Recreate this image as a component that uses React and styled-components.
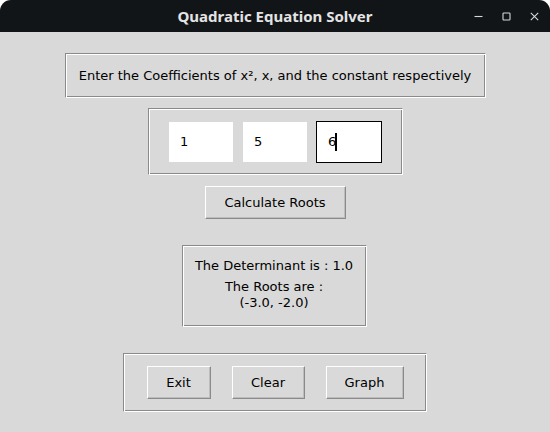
import React from 'react';
import styled, { createGlobalStyle, css } from 'styled-components';

const Global = createGlobalStyle`
  html, body { margin: 0; padding: 0; background: #ffffff; }
  body { font-family: "DejaVu Sans", sans-serif; }
  #root { width: 550px; height: 432px; }
`;

const groove = css`
  box-sizing: border-box;
  border: 1px solid;
  border-color: #8a8a8a #ffffff #ffffff #8a8a8a;
  box-shadow: inset 1px 1px 0 #ffffff, inset -1px -1px 0 #8a8a8a;
`;

const Window = styled.div`
  width: 550px;
  height: 432px;
  background: #d9d9d9;
  border-radius: 11px 11px 0 0;
  overflow: hidden;
  display: flex;
  flex-direction: column;
`;

const TitleBar = styled.header`
  flex: none;
  height: 32px;
  background: #121518;
  display: grid;
  grid-template-columns: 1fr auto 1fr;
  align-items: center;
`;

const Title = styled.h1`
  grid-column: 2;
  margin: 0;
  font: 700 15px "Noto Sans", sans-serif;
  color: #e4e4e4;
  letter-spacing: 0;
`;

const Controls = styled.div`
  grid-column: 3;
  justify-self: end;
  display: flex;
  align-items: center;
  gap: 19px;
  padding-right: 11px;
`;

const ControlIcon = styled.svg`
  display: block;
  width: 9px;
  height: 9px;
  stroke: #d8d8d8;
  stroke-width: 1.1;
  fill: none;
`;

const Main = styled.main`
  flex: 1;
  display: flex;
  flex-direction: column;
  align-items: center;
  color: #000;
  font-size: 13px;
`;

const PromptFrame = styled.div`
  ${groove};
  margin-top: 21px;
  width: 421px;
  height: 45px;
  display: flex;
  align-items: center;
  justify-content: center;
`;

const EntryFrame = styled.div`
  ${groove};
  margin-top: 10px;
  width: 255px;
  height: 67px;
  display: flex;
  align-items: center;
  justify-content: center;
  gap: 8px;
`;

const Entry = styled.div`
  box-sizing: border-box;
  width: 66px;
  height: 42px;
  background: #ffffff;
  border: 1px solid ${(p) => (p.$focused ? '#000000' : '#d9d9d9')};
  padding-left: 11px;
  display: flex;
  align-items: center;
  font-size: 13px;
`;

const Caret = styled.span`
  display: inline-block;
  width: 2px;
  height: 18px;
  background: #000;
  margin-left: -1px;
`;

const Button = styled.button`
  box-sizing: border-box;
  width: ${(p) => p.$w}px;
  height: 33px;
  padding: 0;
  background: #d9d9d9;
  border: 1px solid;
  border-color: #ffffff #8a8a8a #8a8a8a #ffffff;
  box-shadow: inset -1px -1px 0 #bdbdbd;
  font: 13px "DejaVu Sans", sans-serif;
  color: #000;
`;

const CalcButton = styled(Button)`
  margin-top: 11px;
`;

const ResultFrame = styled.div`
  ${groove};
  margin-top: 26px;
  margin-right: 2px;
  width: 185px;
  height: 82px;
  padding-top: 12px;
  display: flex;
  flex-direction: column;
  align-items: center;
  line-height: 16px;
  text-align: center;
`;

const ResultLine = styled.div`
  margin-bottom: ${(p) => p.$gap || 0}px;
`;

const ActionFrame = styled.div`
  ${groove};
  margin-top: 26px;
  width: 304px;
  height: 59px;
  display: flex;
  align-items: center;
  justify-content: center;
  gap: 21px;
`;

export default function App() {
  return (
    <>
      <Global />
      <Window>
        <TitleBar>
          <Title>Quadratic Equation Solver</Title>
          <Controls>
            <ControlIcon viewBox="0 0 9 9">
              <line x1="0.5" y1="4.5" x2="8.5" y2="4.5" />
            </ControlIcon>
            <ControlIcon viewBox="0 0 9 9">
              <rect x="1" y="1" width="7" height="7" rx="0.8" />
            </ControlIcon>
            <ControlIcon viewBox="0 0 9 9">
              <path d="M0.8 0.8 L8.2 8.2 M8.2 0.8 L0.8 8.2" />
            </ControlIcon>
          </Controls>
        </TitleBar>
        <Main>
          <PromptFrame>Enter the Coefficients of x², x, and the constant respectively</PromptFrame>
          <EntryFrame>
            <Entry>1</Entry>
            <Entry>5</Entry>
            <Entry $focused>
              6<Caret />
            </Entry>
          </EntryFrame>
          <CalcButton $w={141}>Calculate Roots</CalcButton>
          <ResultFrame>
            <ResultLine $gap={5}>The Determinant is : 1.0</ResultLine>
            <ResultLine>The Roots are :</ResultLine>
            <ResultLine>(-3.0, -2.0)</ResultLine>
          </ResultFrame>
          <ActionFrame>
            <Button $w={64}>Exit</Button>
            <Button $w={73}>Clear</Button>
            <Button $w={78}>Graph</Button>
          </ActionFrame>
        </Main>
      </Window>
    </>
  );
}
